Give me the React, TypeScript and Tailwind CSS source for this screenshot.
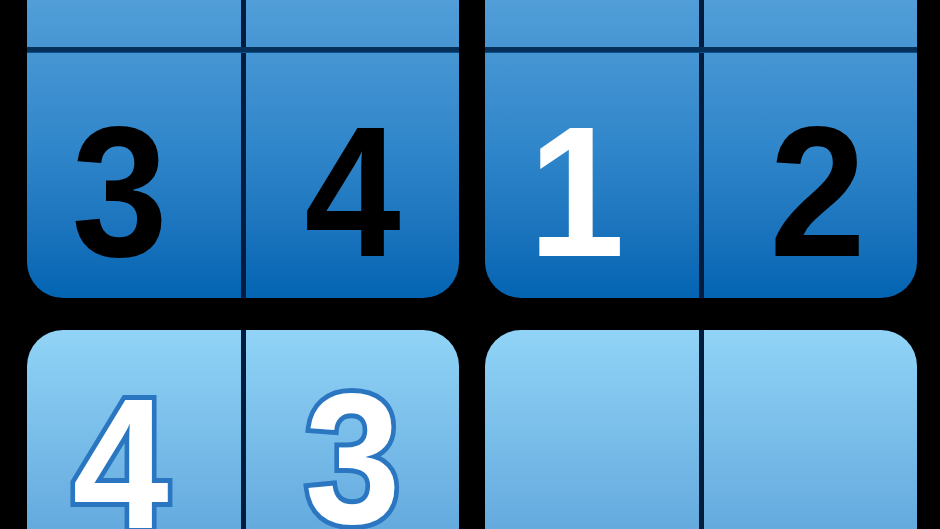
type Tone = 'black' | 'white' | 'outline';

const digitClass: Record<Tone, string> = {
  black: 'text-black',
  white: 'text-white',
  outline:
    'text-white [-webkit-text-stroke:10px_#2a76c0] [paint-order:stroke_fill]',
};

interface CellProps {
  digit?: string;
  tone?: Tone;
  pad?: string;
}

const Cell = ({ digit, tone = 'black', pad = '' }: CellProps) => (
  <div className={`min-w-0 flex justify-center ${pad}`}>
    {digit && (
      <span
        className={`text-[186px] leading-none font-bold scale-x-[0.93] ${digitClass[tone]}`}
        style={{ fontFamily: '"Liberation Sans", Arial, sans-serif' }}
      >
        {digit}
      </span>
    )}
  </div>
);

const Divider = () => <div className="bg-[#011d3e]" />;

interface BlockProps {
  left: CellProps;
  right: CellProps;
}

const TopBlock = ({ left, right }: BlockProps) => (
  <div className="w-[432px] h-[298px] shrink-0 rounded-b-[36px] overflow-hidden flex flex-col bg-linear-to-b from-[#519ed8] via-[#2f86ca] to-[#0264b2]">
    <div className="h-[47px] grid grid-cols-[214px_5px_minmax(0,1fr)]">
      <div />
      <Divider />
      <div />
    </div>
    <div className="h-[6px] bg-[#05305a] border-b border-[#0b4f8c]" />
    <div className="flex-1 grid grid-cols-[214px_5px_minmax(0,1fr)]">
      <Cell {...left} />
      <Divider />
      <Cell {...right} />
    </div>
  </div>
);

const BottomBlock = ({ left, right }: BlockProps) => (
  <div className="w-[432px] shrink-0 rounded-t-[36px] overflow-hidden grid grid-cols-[214px_5px_minmax(0,1fr)] bg-linear-to-b from-[#91d4f7] to-[#5ea4da]">
    <Cell {...left} />
    <Divider />
    <Cell {...right} />
  </div>
);

export default function App() {
  return (
    <div className="w-[940px] h-[529px] bg-black overflow-hidden flex flex-col gap-[32px] pl-[27px]">
      <div className="flex gap-[26px]">
        <TopBlock
          left={{ digit: '3', pad: 'pt-[46px] pr-[28px]' }}
          right={{ digit: '4', pad: 'pt-[46px]' }}
        />
        <TopBlock
          left={{ digit: '1', tone: 'white', pad: 'pt-[46px] pr-[30px]' }}
          right={{ digit: '2', pad: 'pt-[46px] pl-[14px]' }}
        />
      </div>
      <div className="flex-1 flex gap-[26px]">
        <BottomBlock
          left={{ digit: '4', tone: 'outline', pad: 'pt-[41px] pr-[26px]' }}
          right={{ digit: '3', tone: 'outline', pad: 'pt-[36px]' }}
        />
        <BottomBlock left={{}} right={{}} />
      </div>
    </div>
  );
}
